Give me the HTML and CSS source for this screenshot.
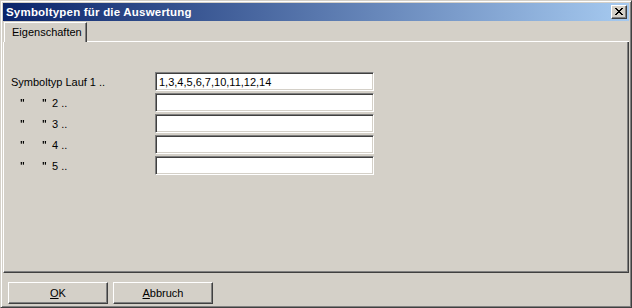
FILE: index.html
```html
<!DOCTYPE html>
<html lang="de">
<head>
<meta charset="utf-8">
<title>Symboltypen für die Auswertung</title>
<link rel="stylesheet" href="styles.css">
</head>
<body>
<div class="window">
  <div class="titlebar">
    <span class="title">Symboltypen für die Auswertung</span>
    <div class="close"><svg width="8" height="7" viewBox="0 0 8 7"><path d="M0 0h2v1h1v1h2v-1h1v-1h2v1h-1v1h-1v1h-1v1h1v1h1v1h1v1h-2v-1h-1v-1h-2v1h-1v1h-2v-1h1v-1h1v-1h1v-1h-1v-1h-1v-1h-1z" fill="#000"/></svg></div>
  </div>
  <div class="tabs">
    <div class="tab">Eigenschaften</div>
    <div class="tab-rest"></div>
  </div>
  <div class="panel">
    <div class="form">
      <div class="label">Symboltyp Lauf 1 ..</div>
      <div class="field">1,3,4,5,6,7,10,11,12,14</div>
      <div class="label"><span class="q1">&quot;</span><span class="q2">&quot;</span>2 ..</div>
      <div class="field"></div>
      <div class="label"><span class="q1">&quot;</span><span class="q2">&quot;</span>3 ..</div>
      <div class="field"></div>
      <div class="label"><span class="q1">&quot;</span><span class="q2">&quot;</span>4 ..</div>
      <div class="field"></div>
      <div class="label"><span class="q1">&quot;</span><span class="q2">&quot;</span>5 ..</div>
      <div class="field"></div>
    </div>
  </div>
  <div class="buttons">
    <div class="btn"><u>O</u>K</div>
    <div class="btn"><u>A</u>bbruch</div>
  </div>
</div>
</body>
</html>
```
FILE: styles.css
```css
html, body {
  margin: 0;
  padding: 0;
  background: #d4d0c8;
}
body {
  font-family: "Liberation Sans", Arial, sans-serif;
  font-size: 11px;
  color: #000;
}
.window {
  width: 632px;
  height: 308px;
  box-sizing: border-box;
  background: #d4d0c8;
  border-top: 1px solid #d4d0c8;
  border-left: 1px solid #d4d0c8;
  border-right: 1px solid #404040;
  border-bottom: 1px solid #404040;
  box-shadow: inset 1px 1px 0 #ffffff, inset -1px -1px 0 #808080;
  padding: 2px;
  display: flex;
  flex-direction: column;
}
.titlebar {
  height: 18px;
  background: linear-gradient(to right, #0a246a, #a6caf0);
  display: flex;
  align-items: center;
  justify-content: space-between;
  padding: 0 2px 0 3px;
}
.title {
  color: #fff;
  font-weight: bold;
  font-size: 11.5px;
  font-family: "Liberation Sans", Arial, sans-serif;
  letter-spacing: 0.2px;
}
.close {
  width: 16px;
  height: 14px;
  box-sizing: border-box;
  background: #d4d0c8;
  border-top: 1px solid #ffffff;
  border-left: 1px solid #ffffff;
  border-right: 1px solid #404040;
  border-bottom: 1px solid #404040;
  box-shadow: inset -1px -1px 0 #808080;
  display: flex;
  align-items: center;
  justify-content: center;
  padding: 0 1px 1px 0;
}
.close svg { display: block; }
.tabs {
  display: flex;
  height: 21px;
  align-items: flex-end;
}
.tab {
  height: 20px;
  box-sizing: border-box;
  padding: 3px 4px 0 7px;
  border-top: 1px solid #ffffff;
  border-left: 1px solid #ffffff;
  border-right: 1px solid #404040;
  box-shadow: inset -1px 0 0 #808080;
  margin-left: 1px;
  width: 83px;
  white-space: nowrap;
}
.tab-rest {
  flex: 1;
  align-self: flex-end;
  height: 1px;
  background: #ffffff;
}
.panel {
  height: 231px;
  box-sizing: border-box;
  border-left: 1px solid #ffffff;
  border-right: 1px solid #404040;
  border-bottom: 1px solid #404040;
  box-shadow: inset -1px -1px 0 #808080;
  padding: 30px 0 0 0;
}
.form {
  display: grid;
  grid-template-columns: 151px 219px;
  grid-auto-rows: 19px;
  row-gap: 2px;
}
.label {
  display: flex;
  align-items: center;
  padding-left: 7px;
  padding-top: 1px;
  white-space: pre;
  color: #000;
}
.q1, .q2 {
  display: inline-block;
  color: #000;
  font-weight: bold;
  font-size: 10px;
  will-change: transform;
}
.q1 {
  width: 22px;
  padding-left: 9px;
}
.q2 {
  width: 10px;
}
.field {
  box-sizing: border-box;
  background: #fff;
  border-top: 1px solid #808080;
  border-left: 1px solid #808080;
  border-right: 1px solid #ffffff;
  border-bottom: 1px solid #ffffff;
  box-shadow: inset 1px 1px 0 #404040, inset -1px -1px 0 #d4d0c8;
  padding: 2px 3px 0 3px;
  line-height: 15px;
}
.buttons {
  display: flex;
  gap: 5px;
  padding: 9px 0 0 5px;
}
.btn {
  width: 100px;
  height: 22px;
  box-sizing: border-box;
  border-top: 1px solid #ffffff;
  border-left: 1px solid #ffffff;
  border-right: 1px solid #404040;
  border-bottom: 1px solid #404040;
  box-shadow: inset -1px -1px 0 #808080;
  display: flex;
  align-items: center;
  justify-content: center;
}
```
